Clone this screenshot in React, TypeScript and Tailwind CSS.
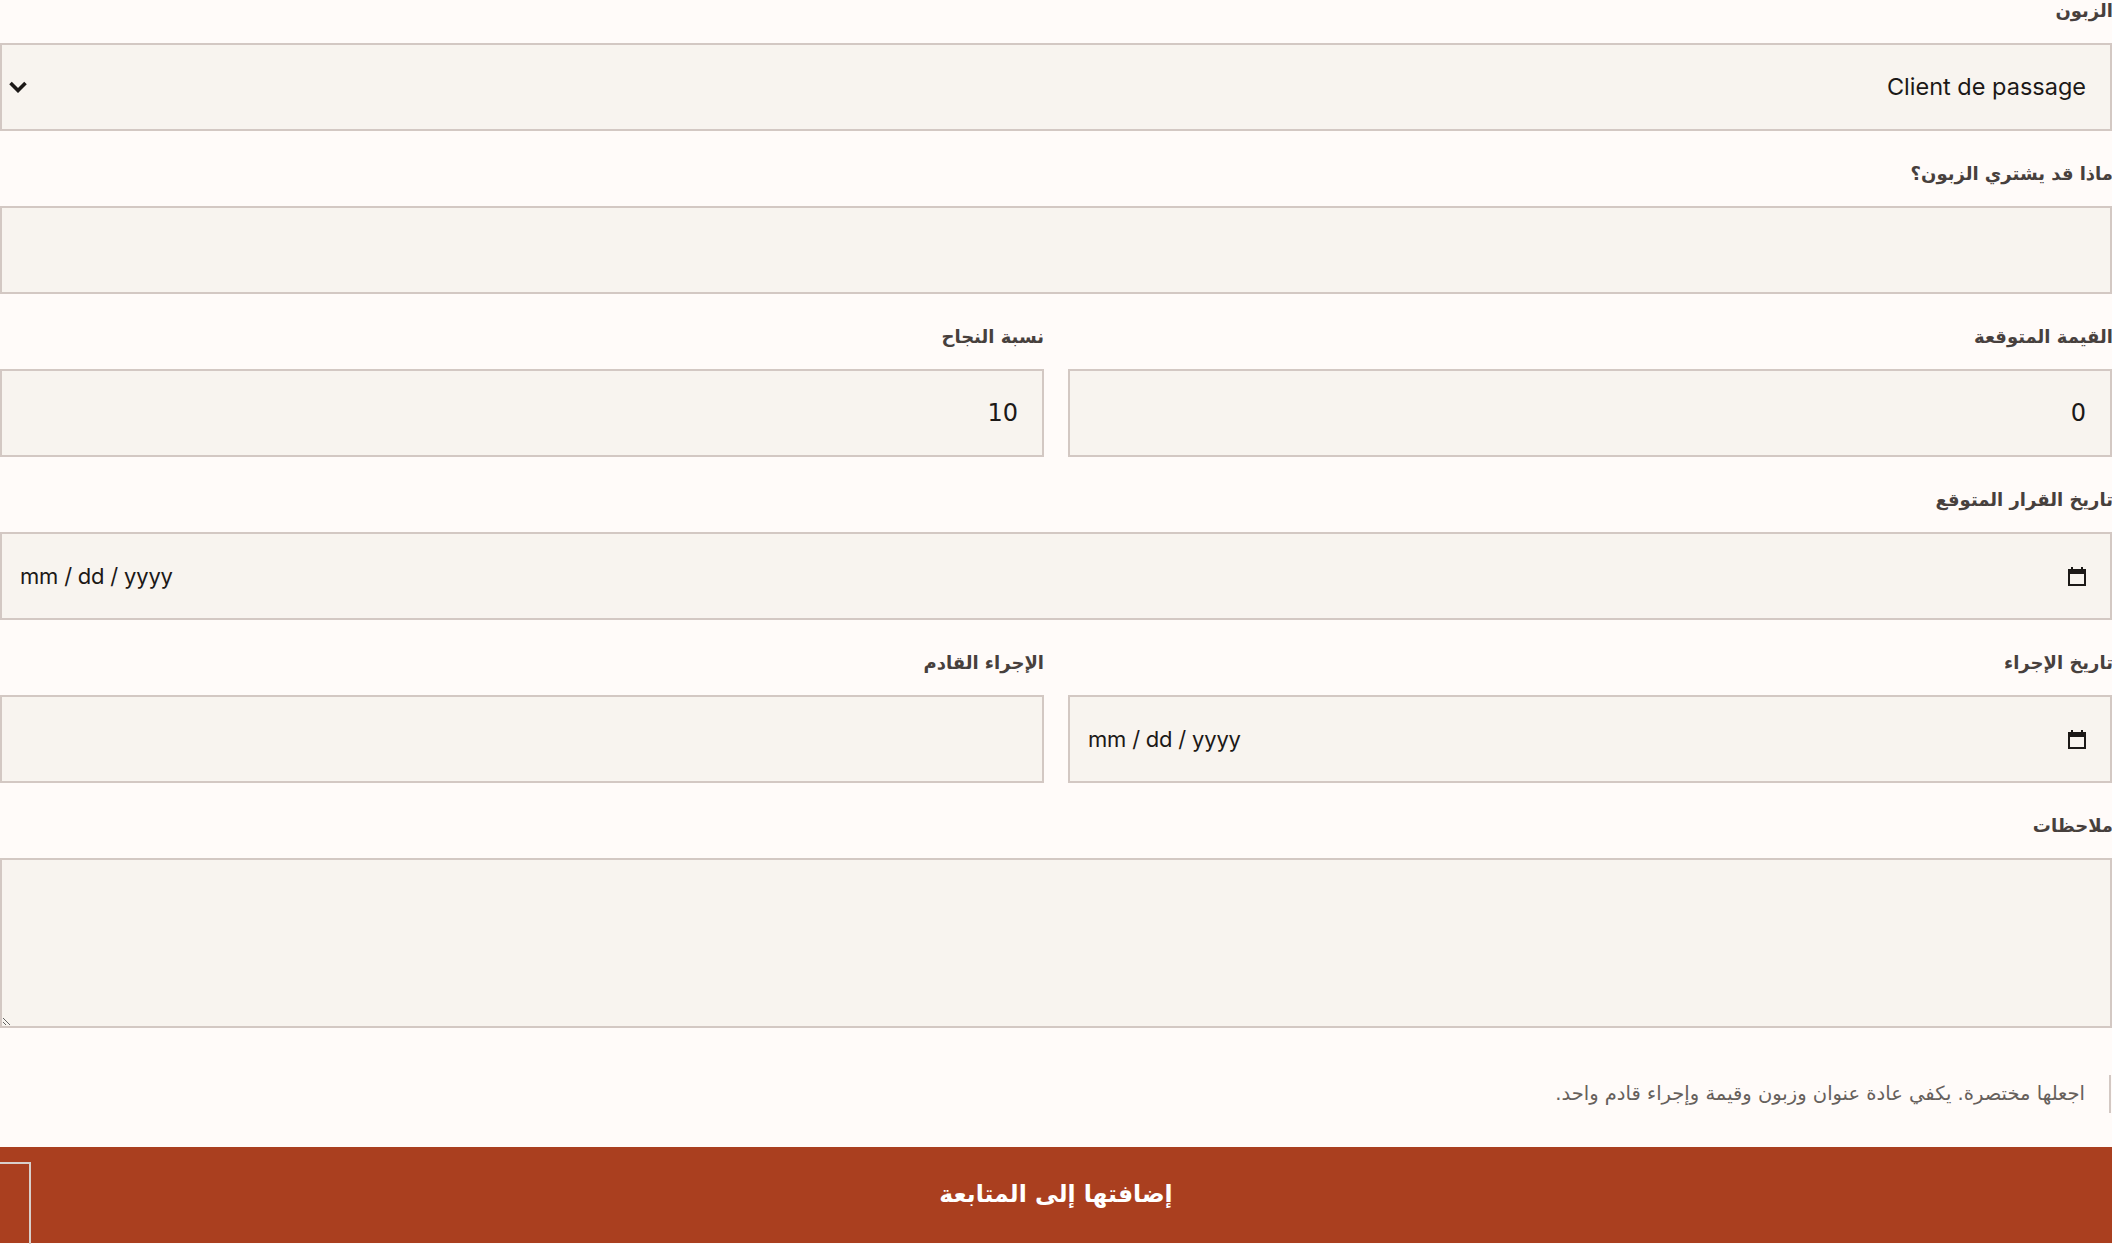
import React from "react";

const labelCls =
  "block h-[24px] leading-[24px] text-[18px] font-bold text-[#47403d] mb-[20px] whitespace-nowrap";
const boxCls =
  "h-[88px] w-full bg-[#f8f4ef] border-2 border-[#d3c8c3] flex items-center";

function Calendar() {
  return (
    <svg width="18" height="19" viewBox="0 0 18 19" className="shrink-0">
      <rect x="1" y="3" width="16" height="15" fill="none" stroke="#1c1917" strokeWidth="2" />
      <rect x="1" y="3" width="16" height="4" fill="#1c1917" />
      <rect x="3" y="0" width="2" height="4" fill="#1c1917" />
      <rect x="13" y="0" width="2" height="4" fill="#1c1917" />
    </svg>
  );
}

function DateBox() {
  return (
    <div dir="ltr" className={boxCls + " justify-between pl-[18px] pr-[24px]"}>
      <span className="font-['Inter',sans-serif] text-[22px] text-[#1c1917] tracking-[-0.2px]">
        mm / dd / yyyy
      </span>
      <Calendar />
    </div>
  );
}

export default function App() {
  return (
    <div
      dir="rtl"
      className="relative w-full h-[1244px] overflow-hidden bg-[#fffbf9] font-['DejaVu_Sans',sans-serif]"
    >
      <div className="flex flex-col gap-[31px] mt-[-1px]">
        <div>
          <label className={labelCls + " -mr-[1px]"}>الزبون</label>
          <div className={boxCls + " justify-between pr-[24px] pl-[7px]"}>
            <span className="font-['Inter',sans-serif] text-[23.5px] text-[#1c1917]">
              Client de passage
            </span>
            <svg width="18" height="12" viewBox="0 0 18 12" className="shrink-0">
              <path d="M1.5 2 L9 9.5 L16.5 2" fill="none" stroke="#1c1917" strokeWidth="3.6" />
            </svg>
          </div>
        </div>

        <div>
          <label className={labelCls + " -mr-[1px]"}>ماذا قد يشتري الزبون؟</label>
          <div className={boxCls}></div>
        </div>

        <div className="grid grid-cols-2 gap-x-[24px]">
          <div>
            <label className={labelCls + " -mr-[1px]"}>القيمة المتوقعة</label>
            <div className={boxCls + " pr-[24px]"}>
              <span className="text-[24px] text-[#1c1917]">0</span>
            </div>
          </div>
          <div>
            <label className={labelCls}>نسبة النجاح</label>
            <div className={boxCls + " pr-[24px]"}>
              <span className="text-[24px] text-[#1c1917]">10</span>
            </div>
          </div>
        </div>

        <div>
          <label className={labelCls + " -mr-[1px]"}>تاريخ القرار المتوقع</label>
          <DateBox />
        </div>

        <div className="grid grid-cols-2 gap-x-[24px]">
          <div>
            <label className={labelCls + " -mr-[1px]"}>تاريخ الإجراء</label>
            <DateBox />
          </div>
          <div>
            <label className={labelCls}>الإجراء القادم</label>
            <div className={boxCls}></div>
          </div>
        </div>

        <div>
          <label className={labelCls + " -mr-[1px]"}>ملاحظات</label>
          <textarea
            dir="rtl"
            className="block h-[170px] w-full bg-[#f8f4ef] border-2 border-[#d3c8c3] resize-y outline-none"
          ></textarea>
        </div>
      </div>

      <div className="mt-[47px] h-[38px] flex items-center border-r-2 border-[#d3c8c3] pr-[24px] mr-[1px]">
        <span className="text-[19.5px] text-[#66605c]">
          اجعلها مختصرة. يكفي عادة عنوان وزبون وقيمة وإجراء قادم واحد.
        </span>
      </div>

      <div className="relative mt-[34px] h-[96px] bg-[#aa3f1f] flex items-center justify-center">
        <span className="text-[23.5px] font-bold text-white">إضافتها إلى المتابعة</span>
        <div className="absolute left-[-2px] top-[15px] w-[33px] h-[100px] border-2 border-[#d8cfcb]"></div>
      </div>
    </div>
  );
}
